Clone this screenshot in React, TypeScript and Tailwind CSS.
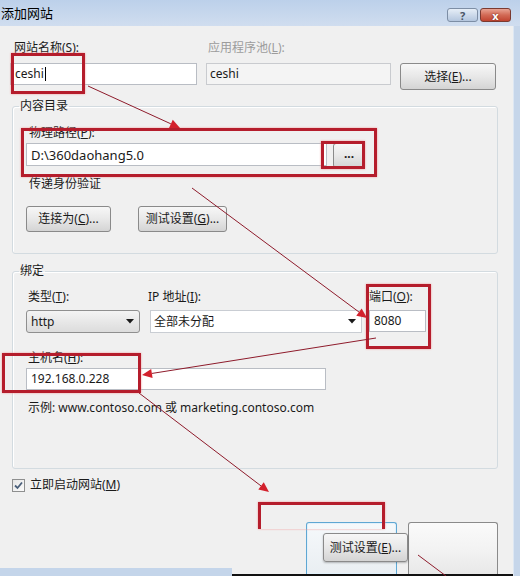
import React from "react";

const BTN =
  "border border-[#8a8a8a] rounded-[3px] bg-gradient-to-b from-[#f7f7f7] via-[#e8e8e8] to-[#d4d4d4] flex items-center justify-center text-[12px] text-[#1a1a1a]";
const INPUT = "border border-[#b9bdc4] bg-white flex items-center pl-[4px] text-[12px]";
const RED = "absolute border-[3px] border-[#b51d2c] shadow-[0_0_2px_#f29a9a]";

function U({ c }: { c: string }) {
  return <span className="underline underline-offset-1">{c}</span>;
}

function Caret() {
  return (
    <svg width="8" height="5" viewBox="0 0 8 5">
      <path d="M0 0 L8 0 L4 4.5 Z" fill="#1a1a1a" />
    </svg>
  );
}

function Arrow({ x1, y1, x2, y2, head = true }: { x1: number; y1: number; x2: number; y2: number; head?: boolean }) {
  const a = Math.atan2(y2 - y1, x2 - x1);
  const L = 10;
  const W = 4.5;
  const bx = x2 - L * Math.cos(a);
  const by = y2 - L * Math.sin(a);
  const pts = `${x2},${y2} ${bx + W * Math.sin(a)},${by - W * Math.cos(a)} ${bx - W * Math.sin(a)},${by + W * Math.cos(a)}`;
  return (
    <g>
      <line x1={x1} y1={y1} x2={head ? bx : x2} y2={head ? by : y2} stroke="#8e1b2b" strokeWidth="1" />
      {head && <polygon points={pts} fill="#d3202c" />}
    </g>
  );
}

export default function App() {
  return (
    <div className="relative w-[520px] h-[576px] overflow-hidden bg-[#f0f0f0] text-[12px] leading-[16px] text-[#1a1a1a] font-['Noto_Sans','Noto_Sans_CJK_SC',sans-serif]">
      {/* title bar */}
      <div className="h-[26px] flex items-start bg-gradient-to-b from-[#bcd0ea] to-[#d0ddef]">
        <span className="mt-[5px] ml-[1px] text-[13px] text-black">添加网站</span>
        <div className="ml-auto mt-[8px] mr-[9px] flex gap-[2px]">
          <div className="w-[31px] h-[14px] rounded-[3px] border border-[#7d8ea5] bg-gradient-to-b from-[#e6eef7] to-[#b4c6de] flex items-center justify-center text-[11px] leading-none font-bold text-[#4a5566]">
            ?
          </div>
          <div className="w-[31px] h-[14px] rounded-[3px] border border-[#7b3a30] bg-gradient-to-b from-[#e8a393] via-[#d26a55] to-[#c0432f] flex items-center justify-center text-[11px] leading-none font-bold text-white [text-shadow:0_0_2px_#5a1a10]">
            x
          </div>
        </div>
      </div>

      <div className="flex h-[550px]">
        {/* dialog content */}
        <div className="w-[513px] flex flex-col">
          <div className="flex pt-[14px] h-[30px]">
            <span className="ml-[14px] w-[194px]">
              网站名称(<U c="S" />):
            </span>
            <span className="text-[#9c9c9c]">
              应用程序池(<U c="L" />):
            </span>
          </div>
          <div className="flex items-start mt-[7px] ml-[10px]">
            <div className={`${INPUT} w-[187px] h-[22px]`}>
              ceshi<span className="w-px h-[14px] bg-black ml-px" />
            </div>
            <div className="ml-[9px] w-[185px] h-[22px] border border-[#c9cbcf] bg-[#f4f4f4] flex items-center pl-[3px]">ceshi</div>
            <div className={`${BTN} ml-[9px] w-[96px] h-[27px]`}>
              选择(<U c="E" />)...
            </div>
          </div>

          <fieldset className="mt-[8px] ml-[12px] w-[486px] border border-[#d3dbe0] rounded-[3px] shadow-[inset_1px_1px_0_#fff]">
            <legend className="ml-[6px] px-[1px] leading-[16px]">内容目录</legend>
            <div className="pl-[13px] flex flex-col">
              <span className="mt-[11px] pl-[3px]">
                物理路径(<U c="P" />):
              </span>
              <div className="flex items-start mt-[2px]">
                <div className={`${INPUT} w-[301px] h-[23px] text-[13px]`}>D:\360daohang5.0</div>
                <div className={`${BTN} ml-[6px] w-[32px] h-[25px] font-bold leading-none pb-[3px]`}>...</div>
              </div>
              <span className="mt-[8px] pl-[3px]">传递身份验证</span>
              <div className="flex mt-[14px] mb-[21px]">
                <div className={`${BTN} w-[85px] h-[26px]`}>
                  连接为(<U c="C" />)...
                </div>
                <div className={`${BTN} ml-[27px] w-[89px] h-[26px]`}>
                  测试设置(<U c="G" />)...
                </div>
              </div>
            </div>
          </fieldset>

          <fieldset className="mt-[9px] ml-[12px] w-[486px] border border-[#d3dbe0] rounded-[3px] shadow-[inset_1px_1px_0_#fff]">
            <legend className="ml-[6px] px-[1px] leading-[16px]">绑定</legend>
            <div className="pl-[13px] flex flex-col">
              <div className="flex mt-[10px]">
                <span className="w-[122px] pl-[2px]">
                  类型(<U c="T" />):
                </span>
                <span className="w-[221px]">
                  IP 地址(<U c="I" />):
                </span>
                <span>
                  端口(<U c="O" />):
                </span>
              </div>
              <div className="flex items-start mt-[5px]">
                <div className="w-[114px] h-[23px] rounded-[3px] border border-[#8f8f8f] bg-gradient-to-b from-[#f4f4f4] to-[#dcdcdc] flex items-center pl-[4px] pr-[5px] justify-between">
                  <span>http</span>
                  <Caret />
                </div>
                <div className="ml-[10px] w-[212px] h-[23px] border border-[#c9cdd3] bg-white flex items-center pl-[3px] pr-[5px] justify-between">
                  <span>全部未分配</span>
                  <Caret />
                </div>
                <div className={`${INPUT} ml-[7px] w-[57px] h-[22px]`}>8080</div>
              </div>
              <span className="mt-[17px] pl-[2px]">
                主机名(<U c="H" />):
              </span>
              <div className={`${INPUT} mt-[2px] w-[300px] h-[22px]`}>192.168.0.228</div>
              <span className="mt-[10px] mb-[52px] pl-[2px]">示例: www.contoso.com 或 marketing.contoso.com</span>
            </div>
          </fieldset>

          <div className="flex items-center mt-[8px] ml-[12px] h-[16px]">
            <div className="w-[13px] h-[13px] border border-[#8e8f8f] bg-gradient-to-br from-[#e6e6e6] to-[#fbfbfb] flex items-center justify-center">
              <svg width="9" height="9" viewBox="0 0 9 9">
                <path d="M1 4.5 L3.5 7 L8 1.5" stroke="#4a5f7a" strokeWidth="1.8" fill="none" />
              </svg>
            </div>
            <span className="ml-[5px]">
              立即启动网站(<U c="M" />)
            </span>
          </div>

          {/* footer */}
          <div className="flex flex-1">
            <div className="w-[232px] flex flex-col justify-end">
              <div className="h-[8px] bg-[#c4d5ea]" />
            </div>
            <div className="flex-1 flex flex-col">
              <div className="flex flex-1 mt-[29px] ml-[74px]">
                <div className="w-[91px] rounded-t-[3px] border border-b-0 border-[#5fa7d3] bg-gradient-to-b from-[#f6f9fb] to-[#e9eef2] shadow-[inset_0_0_0_1px_#e2f1fb]" />
                <div className="ml-[11px] w-[90px] rounded-t-[3px] border border-b-0 border-[#8a8a8a] bg-gradient-to-b from-[#fafafa] via-[#f3f3f3] to-[#e8e8e8]" />
              </div>
              <div className="h-[2px] bg-[#111]" />
            </div>
          </div>
        </div>
        {/* window frame */}
        <div className="w-[7px] bg-[#c6d6ea] border-l border-[#dde7f3]" />
      </div>

      {/* floating button */}
      <div className={`${BTN} absolute left-[323px] top-[533px] w-[85px] h-[29px] shadow-[0_1px_2px_rgba(0,0,0,0.25)]`}>
        测试设置(<U c="E" />)...
      </div>

      {/* annotations */}
      <div className={`${RED} left-[11px] top-[53px] w-[74px] h-[41px]`} />
      <div className={`${RED} left-[21px] top-[128px] w-[356px] h-[49px]`} />
      <div className={`${RED} left-[321px] top-[141px] w-[44px] h-[28px]`} />
      <div className={`${RED} left-[366px] top-[284px] w-[65px] h-[65px]`} />
      <div className={`${RED} left-[2px] top-[353px] w-[139px] h-[40px]`} />
      <div className={`${RED} left-[258px] top-[502px] w-[127px] h-[27px] border-b-0`} />
      <svg className="absolute left-0 top-0 pointer-events-none" width="520" height="576">
        <Arrow x1={88} y1={86} x2={180} y2={128} />
        <Arrow x1={192} y1={188} x2={367} y2={318} />
        <Arrow x1={376} y1={338} x2={142} y2={375} />
        <Arrow x1={139} y1={393} x2={269} y2={492} />
        <Arrow x1={418} y1={555} x2={446} y2={576} head={false} />
      </svg>
    </div>
  );
}
